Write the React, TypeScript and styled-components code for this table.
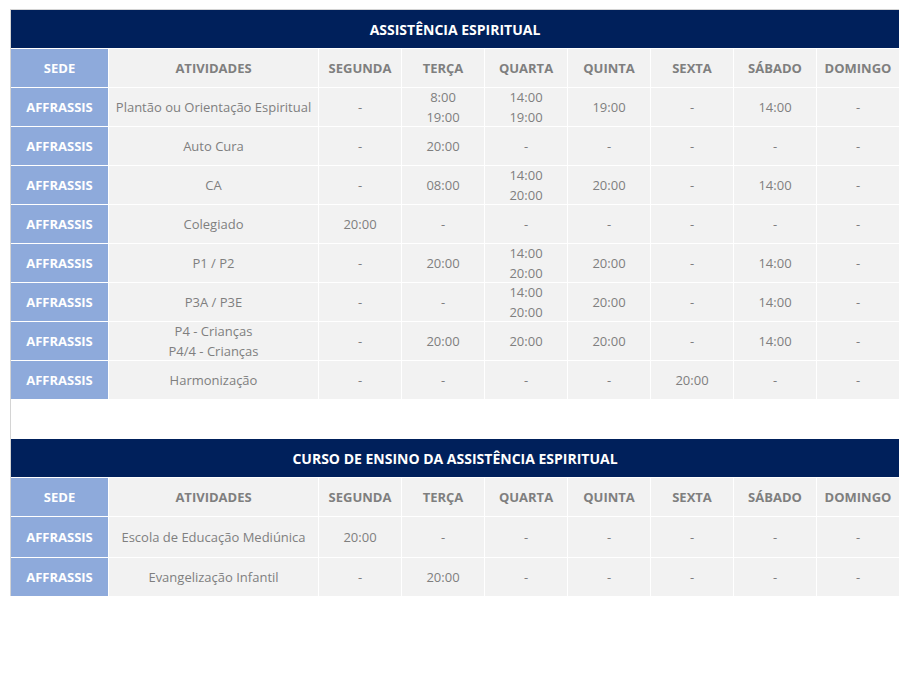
import React from 'react'
import styled, { createGlobalStyle } from 'styled-components'

type Row = { atividade: string[]; dias: string[][] }

const DIAS = ['SEGUNDA', 'TERÇA', 'QUARTA', 'QUINTA', 'SEXTA', 'SÁBADO', 'DOMINGO']

const assistencia: Row[] = [
  {
    atividade: ['Plantão ou Orientação Espiritual'],
    dias: [['-'], ['8:00', '19:00'], ['14:00', '19:00'], ['19:00'], ['-'], ['14:00'], ['-']],
  },
  { atividade: ['Auto Cura'], dias: [['-'], ['20:00'], ['-'], ['-'], ['-'], ['-'], ['-']] },
  {
    atividade: ['CA'],
    dias: [['-'], ['08:00'], ['14:00', '20:00'], ['20:00'], ['-'], ['14:00'], ['-']],
  },
  { atividade: ['Colegiado'], dias: [['20:00'], ['-'], ['-'], ['-'], ['-'], ['-'], ['-']] },
  {
    atividade: ['P1 / P2'],
    dias: [['-'], ['20:00'], ['14:00', '20:00'], ['20:00'], ['-'], ['14:00'], ['-']],
  },
  {
    atividade: ['P3A / P3E'],
    dias: [['-'], ['-'], ['14:00', '20:00'], ['20:00'], ['-'], ['14:00'], ['-']],
  },
  {
    atividade: ['P4 - Crianças', 'P4/4 - Crianças'],
    dias: [['-'], ['20:00'], ['20:00'], ['20:00'], ['-'], ['14:00'], ['-']],
  },
  { atividade: ['Harmonização'], dias: [['-'], ['-'], ['-'], ['-'], ['20:00'], ['-'], ['-']] },
]

const curso: Row[] = [
  {
    atividade: ['Escola de Educação Mediúnica'],
    dias: [['20:00'], ['-'], ['-'], ['-'], ['-'], ['-'], ['-']],
  },
  {
    atividade: ['Evangelização Infantil'],
    dias: [['-'], ['20:00'], ['-'], ['-'], ['-'], ['-'], ['-']],
  },
]

const GlobalStyle = createGlobalStyle`
  body {
    margin: 0;
    background: #ffffff;
    font-family: 'Open Sans', 'Noto Sans', sans-serif;
  }
`

const Page = styled.div`
  margin: 9px 10px 0 10px;
  width: 888px;
  border-top: 1px solid #d4d4d4;
  border-left: 1px solid #d4d4d4;
  display: flex;
  flex-direction: column;
  gap: 40px;
`

const Grid = styled.div<{ $rows: string }>`
  display: grid;
  grid-template-columns: 97px 209px repeat(7, 1fr);
  grid-template-rows: ${(p) => p.$rows};
  gap: 1px;
  background: #ffffff;
`

const Title = styled.div`
  grid-column: 1 / -1;
  background: #00205b;
  color: #ffffff;
  font-size: 14px;
  font-weight: 700;
  display: flex;
  align-items: center;
  justify-content: center;
`

const Cell = styled.div<{ $sede?: boolean; $head?: boolean }>`
  display: flex;
  flex-direction: column;
  align-items: center;
  justify-content: center;
  text-align: center;
  font-size: 13px;
  line-height: 20px;
  background: ${(p) => (p.$sede ? '#8eaadb' : '#f2f2f2')};
  color: ${(p) => (p.$sede ? '#ffffff' : '#7f7f7f')};
  font-weight: ${(p) => (p.$sede || p.$head ? 700 : 400)};
  overflow: visible;
  white-space: nowrap;
`

const Line = styled.span`
  display: block;
`

const Schedule = ({ title, rows, tracks }: { title: string; rows: Row[]; tracks: string }) => (
  <Grid $rows={tracks}>
    <Title>{title}</Title>
    <Cell $sede>SEDE</Cell>
    <Cell $head>ATIVIDADES</Cell>
    {DIAS.map((d) => (
      <Cell $head key={d}>
        {d}
      </Cell>
    ))}
    {rows.map((r, i) => (
      <React.Fragment key={i}>
        <Cell $sede>AFFRASSIS</Cell>
        <Cell>
          {r.atividade.map((a) => (
            <Line key={a}>{a}</Line>
          ))}
        </Cell>
        {r.dias.map((d, j) => (
          <Cell key={j}>
            {d.map((h, k) => (
              <Line key={k}>{h}</Line>
            ))}
          </Cell>
        ))}
      </React.Fragment>
    ))}
  </Grid>
)

const App = () => (
  <>
    <GlobalStyle />
    <Page>
      <Schedule
        title="ASSISTÊNCIA ESPIRITUAL"
        rows={assistencia}
        tracks="repeat(10, 38px)"
      />
      <Schedule
        title="CURSO DE ENSINO DA ASSISTÊNCIA ESPIRITUAL"
        rows={curso}
        tracks="38px 38px 40px 38px"
      />
    </Page>
  </>
)

export default App
